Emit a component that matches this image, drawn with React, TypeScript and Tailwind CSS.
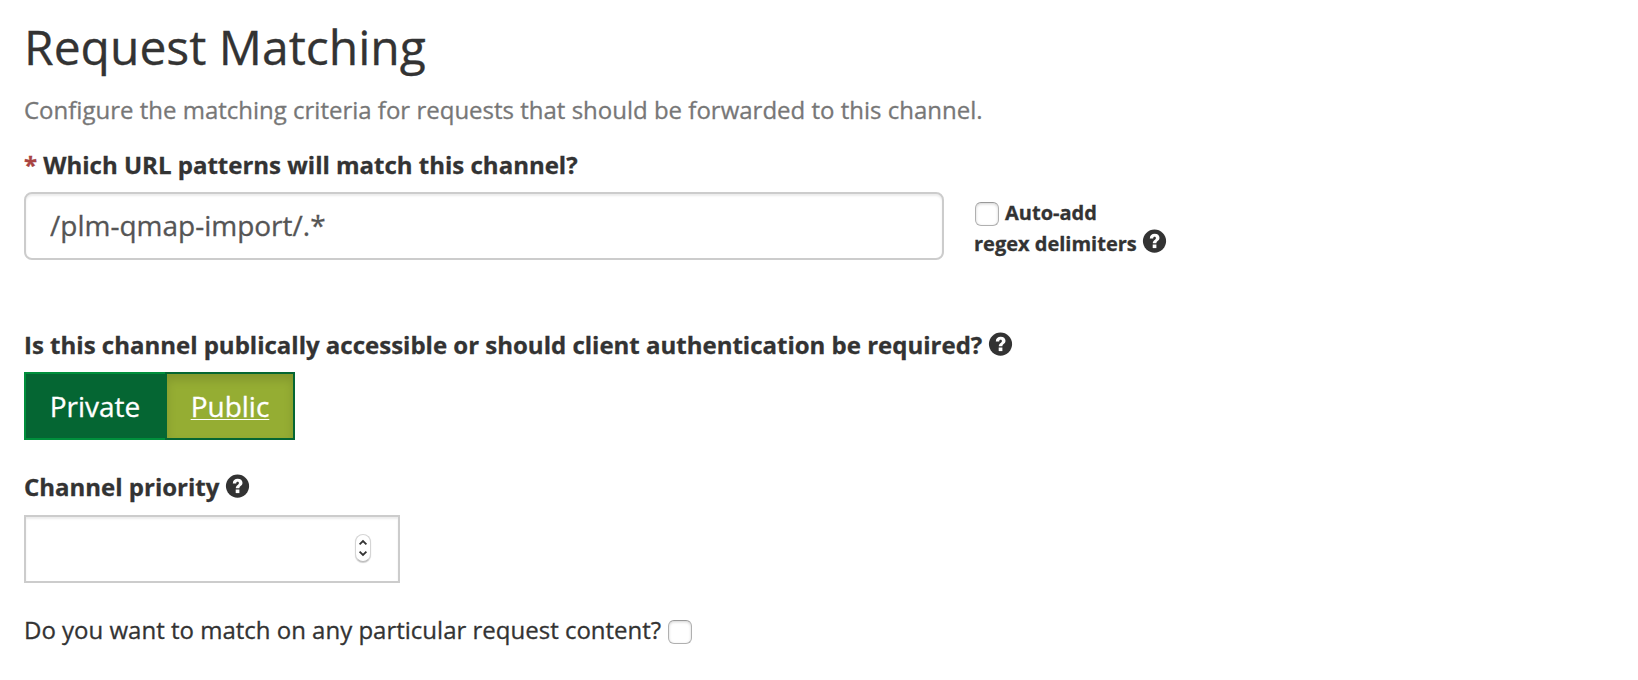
import React from "react";

function HelpIcon({ className = "" }: { className?: string }) {
  return (
    <svg viewBox="0 0 23 23" className={`h-[23px] w-[23px] shrink-0 ${className}`} fill="none">
      <circle cx="11.5" cy="11.1" r="11.6" fill="#333333" />
      <path
        d="M6.8 8.4C6.9 5.2 8.8 3.7 11.7 3.7C14.6 3.7 16.5 5.3 16.5 7.8C16.5 11 13.4 11 13.4 13.3H9.8C9.8 9.9 12.9 10 12.9 7.9C12.9 7.1 12.3 6.7 11.6 6.7C10.7 6.7 10.2 7.3 10.2 8.4Z"
        fill="#ffffff"
      />
      <path d="M9.7 14.5H13.4V18.1H9.7Z" fill="#ffffff" />
    </svg>
  );
}

function Checkbox({ className = "" }: { className?: string }) {
  return (
    <input
      type="checkbox"
      className={`h-6 w-6 shrink-0 appearance-none rounded-[6px] border border-[#b0b0b0] border-t-[#999999] bg-white shadow-[inset_0_1px_3px_rgba(0,0,0,0.18)] ${className}`}
    />
  );
}

export default function App() {
  return (
    <main className="flex h-[680px] w-full flex-col items-start bg-white pl-6 font-['Open_Sans','Noto_Sans',sans-serif] text-2xl leading-[34px] text-[#333333] [-webkit-text-stroke:0.3px] [&_svg]:overflow-visible">
      <h1 className="mt-5 text-[48px] leading-[54px] whitespace-nowrap">Request Matching</h1>
      <p className="mt-[19px] text-[#777777] whitespace-nowrap">
        Configure the matching criteria for requests that should be forwarded to this channel.
      </p>
      <label className="mt-[21px] font-bold whitespace-nowrap">
        <span className="text-[#a94442]">*</span> Which URL patterns will match this channel?
      </label>
      <div className="mt-[10px] flex items-start">
        <input
          type="text"
          defaultValue="/plm-qmap-import/.*"
          className="h-[68px] w-[920px] rounded-lg border-2 border-[#cccccc] bg-white px-6 pb-[2px] text-[28px] text-[#555555] shadow-[inset_0_2px_2px_rgba(0,0,0,0.075)] [-webkit-text-stroke:0.3px]"
        />
        <div className="ml-[31px] mt-[5px] flex flex-col text-xl leading-[31px] font-bold whitespace-nowrap">
          <span className="flex items-start">
            <Checkbox className="mt-[5px]" />
            <span className="ml-[6px]">Auto-add</span>
          </span>
          <span className="-ml-px flex items-start">
            regex delimiters
            <HelpIcon className="ml-[6px] mt-[2px]" />
          </span>
        </div>
      </div>
      <div className="mt-[68px] flex items-start font-bold whitespace-nowrap">
        Is this channel publically accessible or should client authentication be required?
        <HelpIcon className="ml-[7px] mt-[5px]" />
      </div>
      <div className="mt-[10px] flex h-[68px] text-[28px] leading-[64px] text-white">
        <button className="w-[141px] border-2 border-r-0 border-[#008f3c] bg-[#056633] pr-[1px]">Private</button>
        <button className="w-[130px] border-2 border-[#056633] bg-[#95ad33] underline decoration-1 underline-offset-[2px] shadow-[inset_0_6px_10px_rgba(0,0,0,0.125)]">
          Public
        </button>
      </div>
      <div className="mt-[30px] flex items-start font-bold whitespace-nowrap">
        Channel priority
        <HelpIcon className="ml-[7px] mt-[5px]" />
      </div>
      <div className="mt-[11px] flex h-[68px] w-[376px] items-center justify-end border-2 border-[#cccccc] bg-white pr-[27px] pb-[2px] shadow-[inset_0_2px_2px_rgba(0,0,0,0.075)]">
        <span className="flex h-7 w-4 items-center justify-center rounded-full border border-[#d5d5d5] border-b-[#bbbbbb] bg-white shadow-[0_1px_1px_rgba(0,0,0,0.2)]">
          <svg viewBox="0 0 14 26" className="h-[26px] w-[14px] shrink-0" fill="none" stroke="#333333" strokeWidth="1.8">
            <path d="M3.6 9.3L7 6L10.4 9.3M3.6 16.7L7 20L10.4 16.7" />
          </svg>
        </span>
      </div>
      <label className="mt-[30px] flex items-start whitespace-nowrap">
        Do you want to match on any particular request content?
        <Checkbox className="ml-[7px] mt-[7px]" />
      </label>
    </main>
  );
}
